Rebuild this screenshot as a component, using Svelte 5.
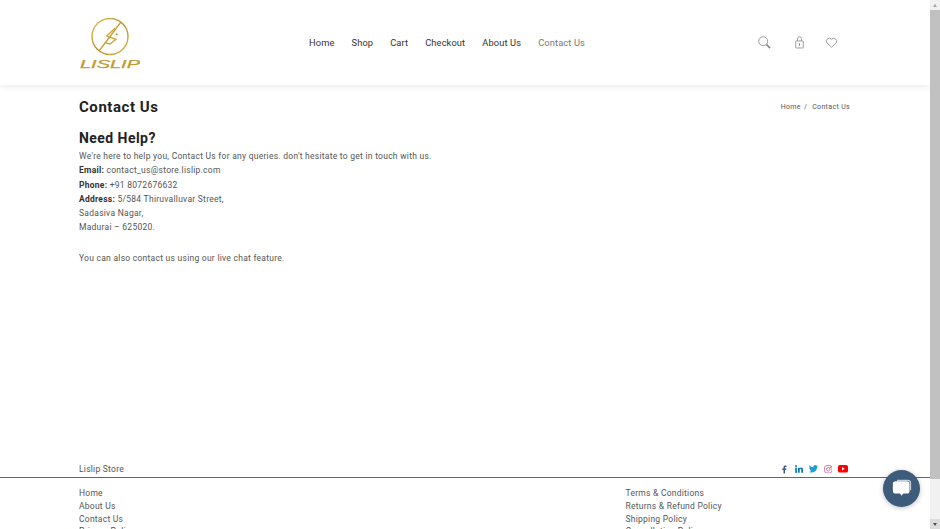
<script>
  const navLinks = ['Home', 'Shop', 'Cart', 'Checkout', 'About Us', 'Contact Us'];
  const leftLinks = ['Home', 'About Us', 'Contact Us', 'Privacy Policy'];
  const rightLinks = ['Terms & Conditions', 'Returns & Refund Policy', 'Shipping Policy', 'Cancellation Policy'];
</script>

<div class="window">
  <div class="page">
    <header class="header">
      <div class="container head-row">
        <a class="logo" href="#top">
          <svg viewBox="0 0 60 52" width="60" height="52" fill="none">
            <defs>
              <linearGradient id="gold" x1="0" y1="0" x2="1" y2="1">
                <stop offset="0" stop-color="#e2c25a" />
                <stop offset="0.5" stop-color="#b98f25" />
                <stop offset="1" stop-color="#d9b84c" />
              </linearGradient>
            </defs>
            <circle cx="30" cy="18.500" r="18" stroke="url(#gold)" stroke-width="1.400" />
            <path d="M19 33 L41 4" stroke="#c9a238" stroke-width="1.400" />
            <path d="M35 10.300 L26.700 18 L36 21.300 L30 26 L25 24.700" stroke="#c9a238" stroke-width="1.300" />
            <circle cx="36.700" cy="16.300" r="1.100" fill="#c59c30" />
            <text x="0" y="49.700" class="logo-text" fill="#c29a30" stroke="#c29a30" stroke-width="0.250" textLength="60" lengthAdjust="spacingAndGlyphs">LISLIP</text>
          </svg>
        </a>
        <nav class="nav">
          {#each navLinks as link, i}
            <a href="#top" class:current={i === navLinks.length - 1}>{link}</a>
          {/each}
        </nav>
        <div class="tools">
          <svg class="tool-search" viewBox="0 0 14 14" width="13" height="13" fill="none" stroke="#888" stroke-width="0.900">
            <circle cx="5.600" cy="5.600" r="4.800" />
            <path d="M9 9 L13 13" stroke-width="1.700" />
          </svg>
          <svg viewBox="0 0 10 14" width="9" height="12.600" fill="none" stroke="#888" stroke-width="0.900">
            <rect x="0.800" y="5.500" width="8.400" height="7.800" rx="0.600" />
            <path d="M2.800 5.500 V3 a2.200 2.200 0 0 1 4.400 0 V5.500" />
            <path d="M5 8.200 V10.600" stroke="#a5688c" stroke-width="1.300" />
          </svg>
          <svg viewBox="0 0 14 12" width="13" height="11" fill="none" stroke="#888" stroke-width="0.900">
            <path d="M7 11.200 L1.600 6 A3.300 3.300 0 0 1 7 2.400 A3.300 3.300 0 0 1 12.400 6 Z" />
          </svg>
        </div>
      </div>
    </header>

    <main class="container main">
      <div class="title-row">
        <h1>Contact Us</h1>
        <div class="crumbs"><span>Home</span><span>/</span><span class="crumb-last">Contact Us</span></div>
      </div>
      <h2>Need Help?</h2>
      <p>We're here to help you, Contact Us for any queries. don't hesitate to get in touch with us.</p>
      <p><b>Email:</b> contact_us@store.lislip.com</p>
      <p><b>Phone:</b> +91 8072676632</p>
      <p><b>Address:</b> 5/584 Thiruvalluvar Street,</p>
      <p>Sadasiva Nagar,</p>
      <p>Madurai – 625020.</p>
      <p class="chat-note">You can also contact us using our live chat feature.</p>
    </main>

    <div class="container store-row">
      <span>Lislip Store</span>
      <div class="social">
        <svg class="fb" viewBox="0 0 10 16" width="5" height="9" fill="#3b5998"><path d="M3 16 V9 H0.500 V6 H3 V3.800 C3 1.300 4.500 0.200 6.500 0.200 L9 0.300 V3 H7.300 C6.200 3 6 3.600 6 4.400 V6 H8.900 L8.400 9 H6 V16 Z" /></svg>
        <svg viewBox="0 0 12 12" width="8" height="8" fill="#0f76b3"><rect x="0.300" y="4" width="2.600" height="7.800" /><circle cx="1.600" cy="1.600" r="1.500" /><path d="M4.500 4 H7 V5.200 C7.500 4.300 8.400 3.800 9.500 3.800 C11.200 3.800 12 4.900 12 6.900 V11.800 H9.400 V7.400 C9.400 6.600 9.100 6 8.300 6 C7.500 6 7.100 6.600 7.100 7.400 V11.800 H4.500 Z" /></svg>
        <svg viewBox="0 0 24 20" width="9" height="7.500" fill="#1d9bd8"><path d="M24 2.400 C23.100 2.800 22.200 3.100 21.200 3.200 C22.200 2.600 23 1.600 23.400 0.500 C22.400 1.100 21.400 1.500 20.300 1.700 C19.300 0.700 18 0 16.500 0 C13.700 0 11.500 2.300 11.500 5 C11.500 5.400 11.500 5.800 11.600 6.200 C7.500 6 3.800 4 1.400 0.900 C1 1.600 0.700 2.500 0.700 3.400 C0.700 5.100 1.600 6.700 2.900 7.600 C2.100 7.600 1.300 7.300 0.600 7 C0.600 9.500 2.300 11.500 4.600 12 C3.900 12.200 3.100 12.200 2.300 12.100 C3 14.100 4.800 15.500 7 15.500 C4.800 17.200 2.500 18 0 17.700 C2.200 19.200 4.800 20 7.500 20 C16.600 20 21.600 12.300 21.600 5.600 L21.600 5 C22.500 4.300 23.400 3.400 24 2.400 Z" /></svg>
        <svg viewBox="0 0 12 12" width="8.500" height="8.500" fill="none" stroke="#d0669b" stroke-width="1.200"><rect x="0.800" y="0.800" width="10.400" height="10.400" rx="3" /><circle cx="6" cy="6" r="2.500" /><circle cx="9" cy="3" r="0.500" fill="#d0669b" /></svg>
        <svg viewBox="0 0 12 9" width="10" height="7.500"><rect width="12" height="9" rx="2.200" fill="#f00" /><path d="M4.800 2.400 L8.200 4.500 L4.800 6.600 Z" fill="#fff" /></svg>
      </div>
    </div>

    <footer class="footer">
      <div class="container foot-cols">
        <ul>
          {#each leftLinks as link}<li>{link}</li>{/each}
        </ul>
        <ul>
          {#each rightLinks as link}<li>{link}</li>{/each}
        </ul>
      </div>
    </footer>

    <button class="chat" aria-label="Chat">
      <svg viewBox="0 0 24 22" width="20" height="18.300">
        <path d="M6 0.800 H19 Q23 0.800 23 5 V13 L21.500 14 V5 Q21.500 2.300 19 2.300 H6 Z" fill="#c5d0db" />
        <path d="M4.500 2.800 H18 Q21 2.800 21 6 V14 Q21 17.500 18 17.500 H13.500 L11.500 20 L9.500 17.500 H4.500 Q1 17.500 1 14 V6 Q1 2.800 4.500 2.800 Z" fill="#fff" />
      </svg>
    </button>
  </div>

  <div class="scrollbar">
    <div class="btn"><i class="arrow up"></i></div>
    <div class="track"><div class="thumb"></div></div>
    <div class="btn btn-down"><i class="arrow down"></i></div>
  </div>
</div>

<style>
  :global(body) {
    margin: 0;
    background: #fff;
  }

  .window {
    display: flex;
    height: 529px;
    overflow: hidden;
    font-family: Roboto, "Liberation Sans", sans-serif;
    color: #333;
  }

  .page {
    position: relative;
    flex: 1;
    min-width: 0;
    display: flex;
    flex-direction: column;
    overflow: hidden;
  }

  .container {
    width: 771px;
    margin-left: 79px;
    flex-shrink: 0;
  }

  .header {
    height: 85px;
    flex-shrink: 0;
    box-shadow: 0 2px 7px rgba(0, 0, 0, 0.08);
  }

  .head-row {
    display: flex;
    align-items: center;
    height: 100%;
  }

  .logo {
    display: block;
    width: 60px;
    height: 52px;
    margin-top: 3px;
    margin-left: 1px;
  }

  .logo-text {
    font-family: "Liberation Sans", sans-serif;
    font-size: 10.500px;
    font-style: italic;
    font-weight: 400;
  }

  .nav {
    display: flex;
    gap: 17px;
    margin-left: 169px;
  }

  .nav a {
    font-size: 9.300px;
    letter-spacing: 0.120px;
    color: #333;
    text-decoration: none;
  }

  .nav a.current {
    color: #777;
  }

  .tools {
    display: flex;
    align-items: center;
    gap: 21px;
    margin-left: auto;
    margin-right: 12px;
  }

  .tool-search {
    margin-right: 3px;
  }

  .main {
    flex: 1;
    font-size: 8.500px;
    letter-spacing: 0.260px;
    color: #555;
  }

  .title-row {
    display: flex;
    justify-content: space-between;
    align-items: center;
    height: 20px;
    margin-top: 12px;
  }

  h1 {
    margin: 0;
    font-size: 15px;
    font-weight: 700;
    letter-spacing: 0.550px;
    color: #222;
  }

  .crumbs {
    display: flex;
    gap: 3px;
    font-size: 7px;
    letter-spacing: 0.350px;
    color: #555;
  }

  .crumb-last {
    margin-left: 2px;
  }

  h2 {
    margin: 11px 0 1px;
    font-size: 14px;
    font-weight: 700;
    letter-spacing: 0.450px;
    line-height: 20px;
    color: #222;
  }

  p {
    margin: 0;
    line-height: 14.300px;
  }

  p b {
    color: #333;
  }

  .chat-note {
    margin-top: 16.500px;
  }

  .store-row {
    display: flex;
    justify-content: space-between;
    align-items: center;
    height: 14px;
    margin-bottom: 1px;
    font-size: 8.500px;
    letter-spacing: 0.250px;
    color: #555;
  }

  .social {
    display: flex;
    align-items: center;
    gap: 6px;
    margin-right: 2px;
  }

  .fb {
    margin-right: 2px;
  }

  .footer {
    height: 51px;
    flex-shrink: 0;
    border-top: 1px solid #666;
    overflow: hidden;
  }

  .foot-cols {
    display: grid;
    grid-template-columns: 546.500px 1fr;
    padding-top: 9px;
  }

  ul {
    margin: 0;
    padding: 0;
    list-style: none;
    font-size: 8.500px;
    letter-spacing: 0.250px;
    line-height: 12.800px;
    color: #555;
  }

  .chat {
    position: absolute;
    top: 470px;
    left: 883px;
    width: 37px;
    height: 37px;
    display: flex;
    align-items: center;
    justify-content: center;
    padding: 0;
    border: 0;
    border-radius: 50%;
    background: #3d5b7a;
    box-shadow: 0 1px 5px rgba(0, 0, 0, 0.25);
  }

  .scrollbar {
    width: 10px;
    flex-shrink: 0;
    display: flex;
    flex-direction: column;
    background: #f1f1f1;
  }

  .btn {
    height: 10px;
    flex-shrink: 0;
    display: flex;
    align-items: center;
    justify-content: center;
  }

  .btn-down {
    background: #dcdcdc;
  }

  .track {
    flex: 1;
  }

  .thumb {
    height: 469px;
    background: #c1c1c1;
  }

  .arrow {
    display: block;
    border-left: 2.500px solid transparent;
    border-right: 2.500px solid transparent;
  }

  .arrow.up {
    border-bottom: 3px solid #a3a3a3;
  }

  .arrow.down {
    border-top: 3px solid #505050;
  }
</style>
